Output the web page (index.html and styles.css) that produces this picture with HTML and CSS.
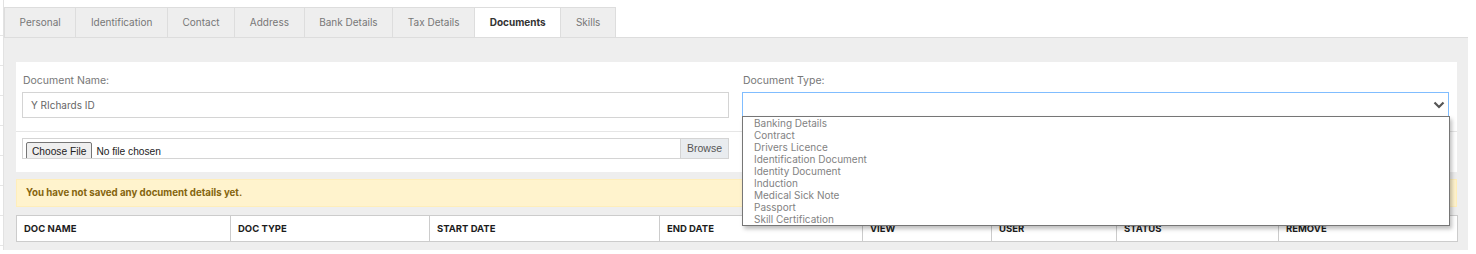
FILE: index.html
```html
<!DOCTYPE html>
<html lang="en">

<head>
    <meta charset="UTF-8">
    <meta name="viewport" content="width=device-width, initial-scale=1.0">
    <title>Employee Documents</title>
    <link rel="stylesheet" href="styles.css">
</head>

<body>
    <div class="page">
        <div class="side">
            <div class="side-row first"></div>
            <div class="side-row"></div>
            <div class="side-row"></div>
            <div class="side-row"></div>
            <div class="side-row"></div>
            <div class="side-row"></div>
            <div class="side-row"></div>
            <div class="side-row"></div>
        </div>
        <div class="main">
            <ul class="tabs">
                <li class="tab">Personal</li>
                <li class="tab">Identification</li>
                <li class="tab">Contact</li>
                <li class="tab">Address</li>
                <li class="tab">Bank Details</li>
                <li class="tab">Tax Details</li>
                <li class="tab active">Documents</li>
                <li class="tab">Skills</li>
            </ul>
            <div class="panel">
                <div class="card">
                    <div class="form-row">
                        <div class="field">
                            <label class="field-label">Document Name:</label>
                            <div class="input">Y RIchards ID</div>
                        </div>
                        <div class="field select-wrap">
                            <label class="field-label">Document Type:</label>
                            <div class="input select">
                                <svg class="chevron" width="12" height="8" viewBox="0 0 12 8">
                                    <path d="M1.5 1.5 L6 6 L10.5 1.5" fill="none" stroke="#555" stroke-width="2.2" />
                                </svg>
                            </div>
                            <ul class="dropdown">
                                <li>Banking Details</li>
                                <li>Contract</li>
                                <li>Drivers Licence</li>
                                <li>Identification Document</li>
                                <li>Identity Document</li>
                                <li>Induction</li>
                                <li>Medical Sick Note</li>
                                <li>Passport</li>
                                <li>Skill Certification</li>
                            </ul>
                        </div>
                    </div>
                    <div class="file-row">
                        <div class="file-input">
                            <span class="choose">Choose File</span>
                            <span class="file-name">No file chosen</span>
                            <span class="browse">Browse</span>
                        </div>
                    </div>
                </div>
                <div class="alert">You have not saved any document details yet.</div>
                <table class="docs">
                    <colgroup>
                        <col class="c-name">
                        <col class="c-type">
                        <col class="c-start">
                        <col class="c-end">
                        <col class="c-view">
                        <col class="c-user">
                        <col class="c-status">
                        <col class="c-remove">
                    </colgroup>
                    <thead>
                        <tr>
                            <th>Doc Name</th>
                            <th>Doc Type</th>
                            <th>Start Date</th>
                            <th>End Date</th>
                            <th>View</th>
                            <th>User</th>
                            <th>Status</th>
                            <th>Remove</th>
                        </tr>
                    </thead>
                </table>
            </div>
        </div>
    </div>
</body>

</html>
```

FILE: styles.css
```css
:root {
    --panel-bg: #eeeeee;
    --line: #dddddd;
    --text-muted: #777777;
    --text-dark: #222222;
    --focus: #80bdff;
}

body {
    margin: 0;
    font-family: Inter, "Noto Sans", sans-serif;
    color: var(--text-dark);
    background: #fff;
}

.page {
    display: flex;
}

.side {
    width: 3px;
    border-right: 1px solid #e2e2e2;
}

.side-row {
    height: 29px;
    border-bottom: 1px solid #e6e6e6;
}

.side-row.first {
    height: 35px;
}

.main {
    width: 1464px;
}

.tabs {
    list-style: none;
    margin: 7px 0 0;
    padding: 0;
    display: flex;
    height: 30px;
}

.tab {
    display: flex;
    align-items: center;
    padding: 0 14.6px 1px;
    background: var(--panel-bg);
    border: 1px solid var(--line);
    border-left: none;
    border-bottom: none;
    font-size: 10px;
    color: var(--text-muted);
}

.tab:first-child {
    border-left: 1px solid var(--line);
}

.tab.active {
    background: #fff;
    color: #333;
    font-weight: 700;
}

.panel {
    background: var(--panel-bg);
    border-top: 1px solid var(--line);
    padding: 24px 11px 8px 12px;
}

.card {
    background: #fff;
}

.form-row {
    display: flex;
    gap: 13px;
    padding: 13px 8px 13px 6px;
    border-bottom: 1px solid #e6e6e6;
}

.field {
    flex: 1;
}

.field-label {
    display: block;
    font-size: 10.5px;
    line-height: 12px;
    color: var(--text-muted);
    margin: 0 0 5px 1px;
}

.input {
    height: 24px;
    border: 1px solid #d4d4d4;
    padding: 0 8px;
    display: flex;
    align-items: center;
    font-size: 10px;
    color: #666;
}

.select-wrap {
    position: relative;
}

.input.select {
    border-color: var(--focus);
    justify-content: flex-end;
    padding-right: 3px;
}

.dropdown {
    position: absolute;
    top: 41px;
    left: 0;
    width: 706px;
    margin: 0;
    padding: 0;
    list-style: none;
    background: #fff;
    border: 1px solid #767676;
    box-shadow: 2px 3px 4px rgba(0, 0, 0, 0.25);
    z-index: 2;
}

.dropdown li {
    height: 12px;
    line-height: 12px;
    font-size: 10px;
    color: #828282;
    padding-left: 11px;
}

.file-row {
    padding: 6px 8px 13px 6px;
}

.file-input {
    width: 705px;
    height: 19px;
    border: 1px solid #d4d4d4;
    display: flex;
    align-items: flex-start;
    overflow: hidden;
    font-family: "Liberation Sans", Arial, sans-serif;
    font-size: 10.2px;
}

.choose {
    margin: 3px 0 0 3px;
    padding: 3px 5px 4px;
    background: #efefef;
    border: 1px solid #767676;
    border-radius: 2px;
    color: #222;
}

.file-name {
    margin: 7px 0 0 4px;
    color: #222;
    flex: 1;
}

.browse {
    width: 48px;
    height: 19px;
    line-height: 19px;
    padding-left: 6px;
    box-sizing: border-box;
    background: #e9ecef;
    border-left: 1px solid #d4d4d4;
    color: #555;
    font-size: 10.5px;
}

.alert {
    margin-top: 7px;
    height: 26px;
    line-height: 26px;
    padding-left: 9px;
    background: #fff3cd;
    border: 1px solid #ffeeba;
    color: #85650f;
    font-size: 9.7px;
    font-weight: 700;
}

.docs {
    margin-top: 8px;
    width: 100%;
    border-collapse: collapse;
    background: #fff;
    table-layout: fixed;
}

.docs th {
    height: 24px;
    padding: 0 7px 1px;
    border: 1px solid #cccccc;
    text-align: left;
    text-transform: uppercase;
    font-size: 9.5px;
    font-weight: 700;
    color: #1c1c1c;
}

.c-name { width: 214px; }
.c-type { width: 199px; }
.c-start { width: 230px; }
.c-end { width: 203px; }
.c-view { width: 129px; }
.c-user { width: 125px; }
.c-status { width: 162px; }
.c-remove { width: 179px; }
```
